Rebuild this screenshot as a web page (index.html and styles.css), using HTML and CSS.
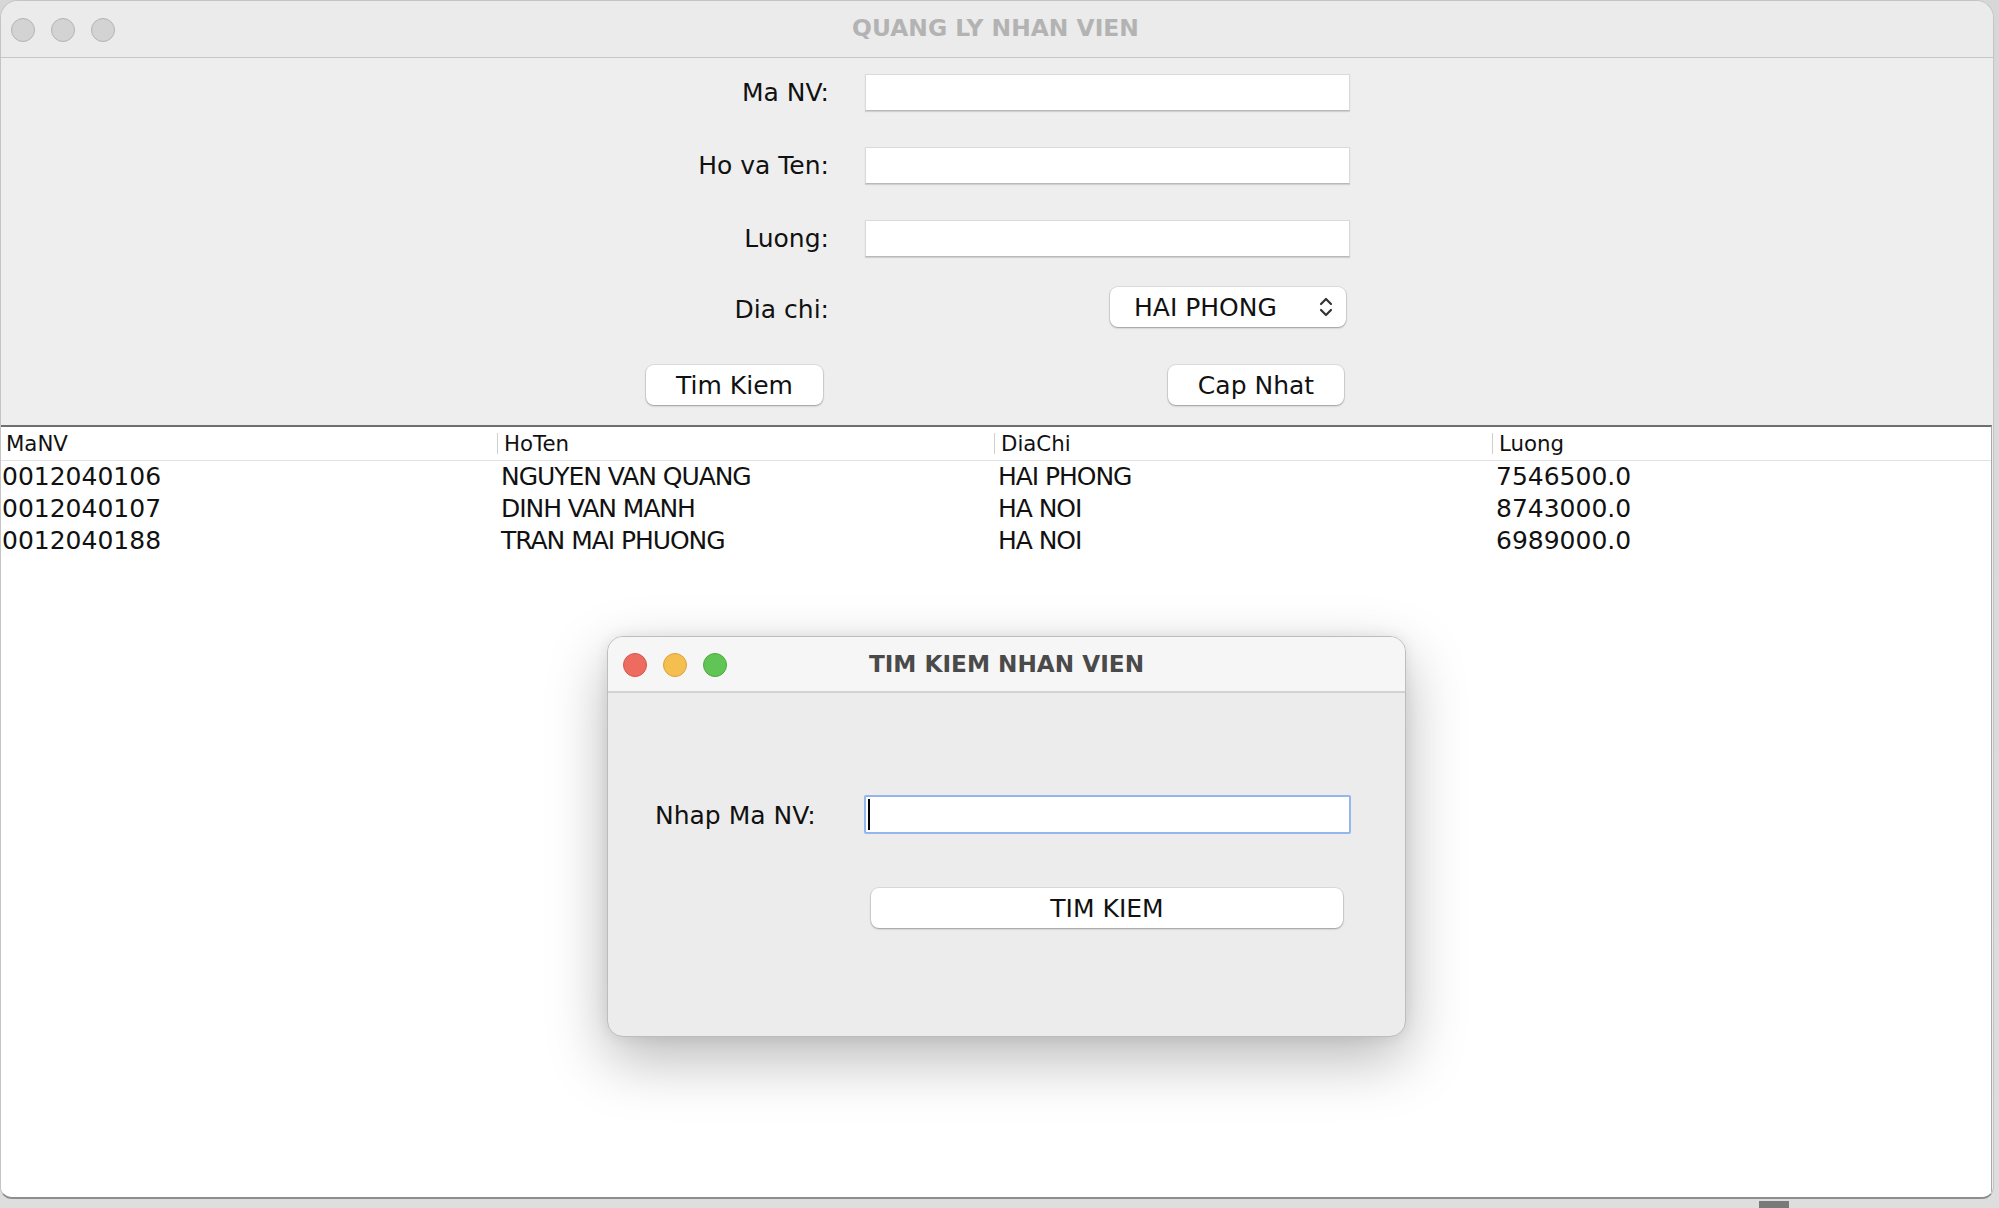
FILE: index.html
```html
<!DOCTYPE html>
<html>
<head>
<meta charset="utf-8">
<title>QUANG LY NHAN VIEN</title>
<link rel="stylesheet" href="styles.css">
</head>
<body>
<div class="desktop">
  <div class="window main">
    <div class="titlebar">
      <div class="lights">
        <span class="light idle"></span>
        <span class="light idle"></span>
        <span class="light idle"></span>
      </div>
      <div class="title inactive">QUANG LY NHAN VIEN</div>
      <div class="spacer"></div>
    </div>
    <div class="form">
      <div class="row first">
        <span class="label">Ma NV:</span>
        <div class="field"></div>
      </div>
      <div class="row">
        <span class="label">Ho va Ten:</span>
        <div class="field"></div>
      </div>
      <div class="row">
        <span class="label">Luong:</span>
        <div class="field"></div>
      </div>
      <div class="row combo-row">
        <span class="label">Dia chi:</span>
        <div class="combo">
          <span class="combo-text">HAI PHONG</span>
          <svg class="chevrons" width="14" height="22" viewBox="0 0 14 22">
            <polyline points="2,8 7,3 12,8" fill="none" stroke="#333" stroke-width="2.2" stroke-linecap="round" stroke-linejoin="round"/>
            <polyline points="2,14 7,19 12,14" fill="none" stroke="#333" stroke-width="2.2" stroke-linecap="round" stroke-linejoin="round"/>
          </svg>
        </div>
      </div>
      <div class="row button-row">
        <button class="btn btn-tim">Tim Kiem</button>
        <button class="btn btn-cap">Cap Nhat</button>
      </div>
    </div>
    <div class="table">
      <div class="thead">
        <div class="th"><span class="th-text">MaNV</span></div>
        <div class="th"><span class="sep"></span><span class="th-text">HoTen</span></div>
        <div class="th"><span class="sep"></span><span class="th-text">DiaChi</span></div>
        <div class="th"><span class="sep"></span><span class="th-text">Luong</span></div>
      </div>
      <div class="tbody">
        <div class="tr">
          <div class="td">0012040106</div>
          <div class="td caps">NGUYEN VAN QUANG</div>
          <div class="td caps">HAI PHONG</div>
          <div class="td">7546500.0</div>
        </div>
        <div class="tr">
          <div class="td">0012040107</div>
          <div class="td caps">DINH VAN MANH</div>
          <div class="td caps">HA NOI</div>
          <div class="td">8743000.0</div>
        </div>
        <div class="tr">
          <div class="td">0012040188</div>
          <div class="td caps">TRAN MAI PHUONG</div>
          <div class="td caps">HA NOI</div>
          <div class="td">6989000.0</div>
        </div>
      </div>
    </div>
  </div>

  <div class="dock-mark"></div>

  <div class="window dialog">
    <div class="titlebar dialog-titlebar">
      <div class="lights">
        <span class="light red"></span>
        <span class="light yellow"></span>
        <span class="light green"></span>
      </div>
      <div class="title active">TIM KIEM NHAN VIEN</div>
      <div class="spacer"></div>
    </div>
    <div class="dialog-body">
      <div class="dialog-row">
        <span class="dialog-label">Nhap Ma NV:</span>
        <div class="field focused"><span class="caret"></span></div>
      </div>
      <button class="btn btn-search">TIM KIEM</button>
    </div>
  </div>
</div>
</body>
</html>
```

FILE: styles.css
```css
* {
  box-sizing: border-box;
}

html, body {
  margin: 0;
  padding: 0;
}

body {
  width: 1999px;
  height: 1208px;
  overflow: hidden;
  background: #d9d9d9;
  font-family: "DejaVu Sans", "Liberation Sans", sans-serif;
  color: #111;
}

.desktop {
  position: relative;
  width: 1999px;
  height: 1208px;
  background: linear-gradient(#d7d7d7, #dedede);
}

.window.main {
  width: 1994px;
  height: 1199px;
  display: flex;
  flex-direction: column;
  background: #ededed;
  border-radius: 18px 18px 12px 12px;
  border: 1px solid #c4c4c4;
  border-bottom: 2px solid #8e8e8e;
  overflow: hidden;
}

.titlebar {
  height: 57px;
  flex: 0 0 57px;
  display: grid;
  grid-template-columns: 1fr auto 1fr;
  align-items: center;
  background: #ebebeb;
  border-bottom: 1px solid #c6c6c6;
}

.lights {
  display: flex;
  gap: 16px;
  padding-left: 10px;
  padding-top: 1px;
}

.light {
  width: 24px;
  height: 24px;
  border-radius: 50%;
  display: block;
}

.light.idle {
  background: #d3d3d3;
  border: 1px solid #b3b3b3;
}

.light.red {
  background: #ee6b60;
  border: 1px solid #d6554b;
}

.light.yellow {
  background: #f5bf4f;
  border: 1px solid #d9a23c;
}

.light.green {
  background: #61c555;
  border: 1px solid #4ca93f;
}

.title {
  font-weight: bold;
  font-size: 23.4px;
  line-height: 28px;
}

.title.inactive {
  color: #b3b3b3;
  margin-top: -3px;
  margin-right: 3px;
}

.title.active {
  color: #4a4a4a;
  font-size: 23.2px;
}

/* ---------- form ---------- */

.form {
  padding-top: 16px;
  padding-bottom: 20px;
  background: #eeeeee;
}

.row {
  display: flex;
  align-items: center;
  margin-top: 36px;
}

.row.first {
  margin-top: 0;
}

.label {
  width: 828px;
  text-align: right;
  font-size: 25px;
  line-height: 30px;
  color: #111;
}

.field {
  width: 485px;
  height: 37px;
  margin-left: 36px;
  background: #ffffff;
  border: 1px solid #dadada;
  border-bottom-color: #b9b9b9;
  box-shadow: 0 1px 1px rgba(0, 0, 0, 0.12);
}

.combo-row {
  margin-top: 30px;
}

.combo-row .label {
  padding-top: 6px;
}

.combo {
  margin-left: 281px;
  width: 236px;
  height: 40px;
  display: flex;
  align-items: center;
  padding-left: 24px;
  padding-right: 13px;
  background: #ffffff;
  border-radius: 8px;
  box-shadow: 0 0 0 1px rgba(0, 0, 0, 0.07), 0 1px 2px rgba(0, 0, 0, 0.3);
  font-size: 25px;
  color: #111;
}

.chevrons {
  margin-left: auto;
}

.button-row {
  margin-top: 38px;
}

.btn {
  height: 40px;
  padding: 0;
  background: #ffffff;
  border: none;
  border-radius: 8px;
  box-shadow: 0 0 0 1px rgba(0, 0, 0, 0.07), 0 1px 2px rgba(0, 0, 0, 0.3);
  font-family: "DejaVu Sans", "Liberation Sans", sans-serif;
  font-size: 25px;
  color: #111;
}

.btn-tim {
  margin-left: 645px;
  width: 177px;
}

.btn-cap {
  margin-left: 345px;
  width: 176px;
}

/* ---------- table ---------- */

.table {
  flex: 1;
  display: flex;
  flex-direction: column;
  background: #ffffff;
  border-top: 2px solid #6f6f6f;
  border-right: 1px solid #a8a8a8;
  margin-right: 1px;
}

.thead {
  display: grid;
  grid-template-columns: 496px 497px 498px 1fr;
  height: 34px;
  border-bottom: 1px solid #e2e2e2;
}

.th {
  display: flex;
  align-items: center;
  font-size: 21.3px;
  color: #111;
}

.th:first-child .th-text {
  margin-left: 5px;
}

.sep {
  width: 1px;
  height: 21px;
  background: #cfcfcf;
}

.th-text {
  margin-left: 6px;
}

.tr {
  display: grid;
  grid-template-columns: 496px 497px 498px 1fr;
  height: 32px;
  align-items: center;
}

.td {
  font-size: 25px;
  line-height: 30px;
  padding-left: 4px;
  color: #111;
  white-space: nowrap;
}

.td.caps {
  letter-spacing: -1.05px;
}

.td:first-child {
  padding-left: 1px;
}

.dock-mark {
  position: absolute;
  left: 1759px;
  top: 1201px;
  width: 30px;
  height: 7px;
  background: #7a7a7a;
}

/* ---------- dialog ---------- */

.window.dialog {
  position: absolute;
  left: 607px;
  top: 636px;
  width: 799px;
  height: 401px;
  display: flex;
  flex-direction: column;
  background: #ececec;
  border: 1px solid #bdbdbd;
  border-radius: 16px;
  overflow: hidden;
  box-shadow: 0 22px 60px rgba(0, 0, 0, 0.28), 0 0 14px rgba(0, 0, 0, 0.08);
}

.dialog-titlebar {
  height: 56px;
  flex: 0 0 56px;
  background: #f6f6f6;
  border-bottom: 2px solid #d2d2d2;
}

.dialog-titlebar .lights {
  padding-left: 15px;
}

.dialog-body {
  padding-top: 102px;
  padding-left: 47px;
}

.dialog-row {
  display: flex;
  align-items: center;
}

.dialog-label {
  width: 209px;
  font-size: 25px;
  line-height: 30px;
  padding-top: 3px;
  color: #111;
}

.field.focused {
  margin-left: 0;
  width: 487px;
  height: 39px;
  display: flex;
  align-items: center;
  border: 2px solid #93b7ec;
  border-radius: 2px;
  box-shadow: none;
  padding-left: 2px;
}

.caret {
  display: block;
  width: 2px;
  height: 31px;
  background: #000;
}

.btn-search {
  display: block;
  margin-top: 54px;
  margin-left: 216px;
  width: 472px;
}
```
